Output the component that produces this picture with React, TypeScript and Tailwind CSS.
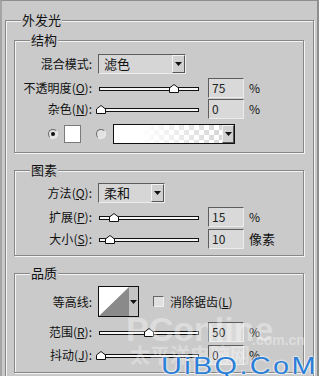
import React from 'react';

const font = "font-['SimSun','Noto_Sans_CJK_SC',sans-serif]";

function Group({ title, className, children }: { title: string; className?: string; children: React.ReactNode }) {
    return (
        <div className={'relative border border-[#878787] shadow-[inset_1px_1px_0_#f4f4f4,1px_1px_0_#f4f4f4] ' + (className || '')}>
            <div className="absolute left-[15px] top-[-9px] bg-[#cacaca] px-[1px] text-[13px] leading-[16px] text-[#111]">{title}</div>
            {children}
        </div>
    );
}

function Label({ text, hot }: { text: string; hot?: string }) {
    return (
        <div className="w-[77px] shrink-0 text-right text-[12px] leading-[14px] text-[#111]">
            {text}
            {hot && (
                <>
                    (<span className="underline">{hot}</span>)
                </>
            )}
            :
        </div>
    );
}

function Slider({ pos }: { pos: number }) {
    return (
        <div className="relative ml-[7px] h-[20px] w-[100px]">
            <div className="absolute left-0 right-0 top-[9px] h-[4px] border border-[#111] bg-[#f6f6f6]" />
            <svg
                className="absolute top-[6px]"
                style={{ left: pos - 5 }}
                width="10"
                height="9"
                viewBox="0 0 10 9"
            >
                <path d="M0.5 8.5 V4 L5 0.5 L9.5 4 V8.5 Z" fill="#fff" stroke="#111" />
            </svg>
        </div>
    );
}

function NumBox({ value }: { value: string }) {
    return (
        <div className="ml-[9px] h-[20px] w-[36px] border border-t-[#5d5d5d] border-l-[#5d5d5d] border-b-[#ececec] border-r-[#ececec] bg-[#d9d9d9] pl-[3px] text-[12px] leading-[18px] text-[#222]">
            {value}
        </div>
    );
}

function Arrow({ className }: { className?: string }) {
    return (
        <div className={'flex items-center justify-center border border-t-[#f2f2f2] border-l-[#f2f2f2] border-b-[#555] border-r-[#555] bg-[#d0d0d0] ' + (className || '')}>
            <svg width="7" height="4" viewBox="0 0 7 4">
                <path d="M0 0 H7 L3.5 4 Z" fill="#111" />
            </svg>
        </div>
    );
}

function Select({ value, width }: { value: string; width: string }) {
    return (
        <div className={'ml-[6px] flex h-[20px] items-stretch border border-t-[#5d5d5d] border-l-[#5d5d5d] border-b-[#ededed] border-r-[#ededed] bg-[#d6d6d6] ' + width}>
            <div className="flex-1 pl-[5px] text-[13px] leading-[18px] text-[#111]">{value}</div>
            <Arrow className="w-[13px]" />
        </div>
    );
}

function Radio({ checked }: { checked?: boolean }) {
    return (
        <div className="flex h-[10px] w-[10px] items-center justify-center rounded-full border border-t-[#6a6a6a] border-l-[#6a6a6a] border-b-[#f0f0f0] border-r-[#f0f0f0] bg-[#e2e2e2]">
            {checked && <div className="h-[4px] w-[4px] rounded-full bg-[#111]" />}
        </div>
    );
}

export default function App() {
    return (
        <div className={'relative h-[376px] w-[319px] overflow-hidden border-l-2 border-r-2 border-t border-l-[#a5a5a5] border-r-[#8e8e8e] border-t-[#8e8e8e] bg-[#cacaca] ' + font}>
            <Group title="外发光" className="ml-[3px] mt-[19px] h-[370px] w-[309px]">
                <div className="px-[8px] pt-[19px]">
                    <Group title="结构" className="h-[113px] w-[290px]">
                        <div className="pt-[13px]">
                            <div className="flex items-center">
                                <Label text="混合模式" />
                                <Select value="滤色" width="w-[88px]" />
                            </div>
                            <div className="mt-[4px] flex items-center">
                                <Label text="不透明度" hot="O" />
                                <Slider pos={75} />
                                <NumBox value="75" />
                                <span className="ml-[5px] text-[12px] text-[#111]">%</span>
                            </div>
                            <div className="mt-[1px] flex items-center">
                                <Label text="杂色" hot="N" />
                                <Slider pos={2} />
                                <NumBox value="0" />
                                <span className="ml-[5px] text-[12px] text-[#111]">%</span>
                            </div>
                            <div className="mt-[5px] flex h-[20px] items-center">
                                <div className="ml-[33px]"><Radio checked /></div>
                                <div className="ml-[6px] h-[18px] w-[17px] border border-[#7a7a7a] bg-white" />
                                <div className="ml-[15px]"><Radio /></div>
                                <div className="ml-[7px] flex h-[20px] w-[122px] border border-[#111]">
                                    <div className="flex-1 bg-[linear-gradient(to_right,#fff_0%,#fff_25%,rgba(255,255,255,0)_100%),repeating-conic-gradient(#d6d6d6_0%_25%,#fff_0%_50%)] bg-[length:100%_100%,10px_10px]" />
                                    <Arrow className="w-[12px] border-l-[#111]" />
                                </div>
                            </div>
                        </div>
                    </Group>
                    <Group title="图素" className="mt-[17px] h-[86px] w-[290px]">
                        <div className="pt-[12px]">
                            <div className="flex items-center">
                                <Label text="方法" hot="Q" />
                                <Select value="柔和" width="w-[67px]" />
                            </div>
                            <div className="mt-[4px] flex items-center">
                                <Label text="扩展" hot="P" />
                                <Slider pos={15} />
                                <NumBox value="15" />
                                <span className="ml-[5px] text-[12px] text-[#111]">%</span>
                            </div>
                            <div className="mt-[2px] flex items-center">
                                <Label text="大小" hot="S" />
                                <Slider pos={11} />
                                <NumBox value="10" />
                                <span className="ml-[5px] text-[13px] text-[#111]">像素</span>
                            </div>
                        </div>
                    </Group>
                    <Group title="品质" className="mt-[17px] h-[100px] w-[290px]">
                        <div className="pt-[12px]">
                            <div className="flex items-center">
                                <Label text="等高线" />
                                <div className="ml-[6px] flex h-[31px] w-[41px] border border-[#111]">
                                    <svg width="30" height="29" viewBox="0 0 30 29" className="bg-white">
                                        <path d="M0 29 L30 0 V29 Z" fill="#8a8a8a" />
                                    </svg>
                                    <div className="flex flex-1 items-center justify-center bg-[#c4c4c4]">
                                        <svg width="7" height="4" viewBox="0 0 7 4">
                                            <path d="M0 0 H7 L3.5 4 Z" fill="#111" />
                                        </svg>
                                    </div>
                                </div>
                                <div className="ml-[14px] h-[11px] w-[11px] border border-t-[#666] border-l-[#666] border-b-[#f0f0f0] border-r-[#f0f0f0] bg-[#e0e0e0]" />
                                <div className="ml-[6px] text-[12px] text-[#111]">
                                    消除锯齿(<span className="underline">L</span>)
                                </div>
                            </div>
                            <div className="mt-[5px] flex items-center">
                                <Label text="范围" hot="R" />
                                <Slider pos={50} />
                                <NumBox value="50" />
                                <span className="ml-[5px] text-[12px] text-[#111]">%</span>
                            </div>
                            <div className="mt-[3px] flex items-center">
                                <Label text="抖动" hot="J" />
                                <Slider pos={2} />
                                <NumBox value="0" />
                                <span className="ml-[5px] text-[12px] text-[#111]">%</span>
                            </div>
                        </div>
                    </Group>
                </div>
            </Group>

            {/* watermarks */}
            <div className="pointer-events-none absolute left-[124px] top-[311px] font-['Liberation_Sans',sans-serif] text-[34px] font-bold leading-[34px] text-white opacity-35">
                PConline
            </div>
            <div className="pointer-events-none absolute left-[250px] top-[329px] font-['Liberation_Sans',sans-serif] text-[14px] font-bold text-white opacity-35">
                .com.cn
            </div>
            <div className="pointer-events-none absolute left-[128px] top-[343px] text-[20px] font-bold leading-[22px] text-white opacity-30">
                太平洋电脑网
            </div>
            <div className="pointer-events-none absolute left-[159px] top-[353px] origin-left scale-x-[1.2] whitespace-nowrap font-['Liberation_Sans',sans-serif] text-[24px] leading-[24px] tracking-[2px] text-[#2b7fd6] [text-shadow:0_0_2px_#fff,0_0_2px_#fff]">
                UiBQ.CoM
            </div>
        </div>
    );
}
